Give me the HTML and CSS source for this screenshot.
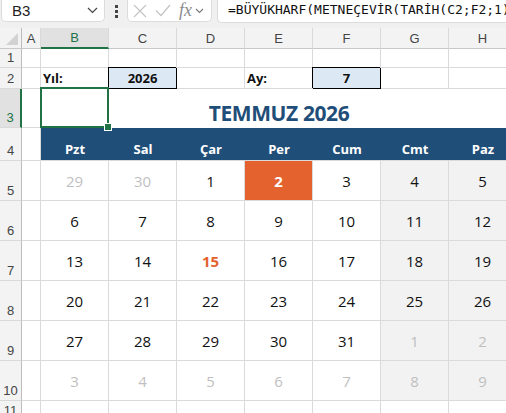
FILE: index.html
```html
<!DOCTYPE html>
<html lang="tr">
<head>
<meta charset="utf-8">
<title>Takvim - Temmuz 2026</title>
<link rel="stylesheet" href="styles.css">
</head>
<body>

<div class="toolbar">
  <div class="namebox">
    <span>B3</span>
    <svg width="11" height="7" viewBox="0 0 11 7"><path d="M1 1l4.5 4.5L10 1" fill="none" stroke="#444" stroke-width="1.2"/></svg>
  </div>
  <div class="kebab"><i></i><i></i><i></i></div>
  <div class="fxbox">
    <svg width="14" height="14" viewBox="0 0 14 14"><path d="M1 1l12 12M13 1L1 13" fill="none" stroke="#c4c4c4" stroke-width="1.2"/></svg>
    <svg width="16" height="13" viewBox="0 0 16 13"><path d="M1 6.5l5 5L15 1" fill="none" stroke="#c4c4c4" stroke-width="1.2"/></svg>
    <span class="fx">fx</span>
    <svg width="9" height="6" viewBox="0 0 9 6"><path d="M1 1l3.5 3.5L8 1" fill="none" stroke="#777" stroke-width="1.1"/></svg>
  </div>
  <div class="formula">=BÜYÜKHARF(METNEÇEVİR(TARİH(C2;F2;1);"aaaa yyyy"))</div>
</div>

<div class="sheet">
  <!-- column headers -->
  <div class="corner"><svg width="12" height="12" viewBox="0 0 12 12"><path d="M12 0V12H0z" fill="#d2d2d2"/></svg></div>
  <div class="colh">A</div>
  <div class="colh sel">B</div>
  <div class="colh">C</div>
  <div class="colh">D</div>
  <div class="colh">E</div>
  <div class="colh">F</div>
  <div class="colh">G</div>
  <div class="colh">H</div>

  <!-- row 1 -->
  <div class="rowh">1</div>
  <div class="cell"></div><div class="cell"></div><div class="cell"></div><div class="cell"></div>
  <div class="cell"></div><div class="cell"></div><div class="cell"></div><div class="cell"></div>

  <!-- row 2 -->
  <div class="rowh">2</div>
  <div class="cell"></div>
  <div class="cell lbl">Yıl:</div>
  <div class="cell input">2026</div>
  <div class="cell"></div>
  <div class="cell lbl">Ay:</div>
  <div class="cell input">7</div>
  <div class="cell"></div>
  <div class="cell"></div>

  <!-- row 3 -->
  <div class="rowh sel">3</div>
  <div class="cell"></div>
  <div class="cell title">
    TEMMUZ 2026
    <span class="selection"><span class="handle"></span></span>
  </div>

  <!-- row 4 -->
  <div class="rowh">4</div>
  <div class="cell"></div>
  <div class="dname">Pzt</div>
  <div class="dname">Sal</div>
  <div class="dname">Çar</div>
  <div class="dname">Per</div>
  <div class="dname">Cum</div>
  <div class="dname">Cmt</div>
  <div class="dname">Paz</div>

  <!-- row 5 -->
  <div class="rowh">5</div>
  <div class="cell"></div>
  <div class="cell day muted">29</div>
  <div class="cell day muted">30</div>
  <div class="cell day">1</div>
  <div class="cell day today">2</div>
  <div class="cell day">3</div>
  <div class="cell day we">4</div>
  <div class="cell day we">5</div>

  <!-- row 6 -->
  <div class="rowh">6</div>
  <div class="cell"></div>
  <div class="cell day">6</div>
  <div class="cell day">7</div>
  <div class="cell day">8</div>
  <div class="cell day">9</div>
  <div class="cell day">10</div>
  <div class="cell day we">11</div>
  <div class="cell day we">12</div>

  <!-- row 7 -->
  <div class="rowh">7</div>
  <div class="cell"></div>
  <div class="cell day">13</div>
  <div class="cell day">14</div>
  <div class="cell day holiday">15</div>
  <div class="cell day">16</div>
  <div class="cell day">17</div>
  <div class="cell day we">18</div>
  <div class="cell day we">19</div>

  <!-- row 8 -->
  <div class="rowh">8</div>
  <div class="cell"></div>
  <div class="cell day">20</div>
  <div class="cell day">21</div>
  <div class="cell day">22</div>
  <div class="cell day">23</div>
  <div class="cell day">24</div>
  <div class="cell day we">25</div>
  <div class="cell day we">26</div>

  <!-- row 9 -->
  <div class="rowh">9</div>
  <div class="cell"></div>
  <div class="cell day">27</div>
  <div class="cell day">28</div>
  <div class="cell day">29</div>
  <div class="cell day">30</div>
  <div class="cell day">31</div>
  <div class="cell day we muted">1</div>
  <div class="cell day we muted">2</div>

  <!-- row 10 -->
  <div class="rowh">10</div>
  <div class="cell"></div>
  <div class="cell day muted">3</div>
  <div class="cell day muted">4</div>
  <div class="cell day muted">5</div>
  <div class="cell day muted">6</div>
  <div class="cell day muted">7</div>
  <div class="cell day we muted">8</div>
  <div class="cell day we muted">9</div>

  <!-- row 11 -->
  <div class="rowh">11</div>
  <div class="cell"></div><div class="cell"></div><div class="cell"></div><div class="cell"></div>
  <div class="cell"></div><div class="cell"></div><div class="cell"></div><div class="cell"></div>
</div>

</body>
</html>
```

FILE: styles.css
```css
html, body {
  margin: 0;
  height: 100%;
}
body {
  width: 506px;
  height: 413px;
  overflow: hidden;
  background-color: #fff;
  font-family: "Open Sans", sans-serif;
  color: #111;
}

/* formula bar */
.toolbar {
  display: flex;
  align-items: flex-start;
  height: 28px;
  padding-left: 1px;
  background: #f0f0f0;
  box-sizing: border-box;
}
.namebox {
  width: 104px;
  height: 22px;
  display: flex;
  align-items: center;
  justify-content: space-between;
  padding: 0 6px 0 10px;
  box-sizing: border-box;
  background: #fff;
  border: 1px solid #dcdcdc;
  border-top: none;
  border-radius: 0 0 5px 5px;
  font-family: "Liberation Sans", sans-serif;
  font-size: 15px;
  color: #222;
}
.kebab {
  width: 22px;
  height: 22px;
  display: flex;
  flex-direction: column;
  align-items: center;
  justify-content: center;
  gap: 2px;
}
.kebab i {
  width: 3px;
  height: 3px;
  background: #444;
}
.fxbox {
  width: 85px;
  height: 22px;
  display: flex;
  align-items: center;
  gap: 8px;
  padding-left: 5px;
  box-sizing: border-box;
  background: #fff;
  border: 1px solid #dcdcdc;
  border-top: none;
  border-radius: 0 0 5px 5px;
}
.fx {
  font-family: "Liberation Serif", serif;
  font-style: italic;
  font-size: 18px;
  color: #8c8c8c;
  margin-right: -5px;
}
.formula {
  flex: 1;
  height: 22px;
  margin-left: 5px;
  padding-left: 10px;
  background: #fff;
  border: 1px solid #dcdcdc;
  border-top: none;
  border-right: none;
  border-bottom-left-radius: 5px;
  font-family: "DejaVu Sans Mono", monospace;
  font-size: 13px;
  line-height: 20px;
  white-space: nowrap;
  overflow: hidden;
  color: #111;
}

/* grid */
.sheet {
  display: grid;
  grid-template-columns: 22px 19px repeat(7, 68px);
  grid-template-rows: 21px 19px 21px 39px 33px repeat(6, 40px) 20px;
}
.sheet > div {
  box-sizing: border-box;
}
.corner {
  display: flex;
  align-items: flex-end;
  justify-content: flex-end;
  padding: 0 3px 3px 0;
  background: #f3f3f3;
  border-right: 1px solid #bdbdbd;
  border-bottom: 1px solid #c8c8c8;
}
.colh {
  display: flex;
  align-items: center;
  justify-content: center;
  background: #f3f3f3;
  border-right: 1px solid #d9d9d9;
  border-bottom: 1px solid #c8c8c8;
  font-family: "Liberation Sans", sans-serif;
  font-size: 13px;
  color: #444;
}
.colh.sel {
  background: #e1e1e1;
  color: #217346;
  border-bottom: 2px solid #217346;
}
.rowh {
  display: flex;
  align-items: flex-end;
  justify-content: center;
  padding-bottom: 2px;
  background: #f3f3f3;
  border-right: 1px solid #bdbdbd;
  border-bottom: 1px solid #d9d9d9;
  font-family: "Liberation Sans", sans-serif;
  font-size: 13px;
  color: #444;
}
.rowh.sel {
  background: #e1e1e1;
  color: #217346;
  border-right: 2px solid #217346;
}
.cell {
  border-right: 1px solid #dadada;
  border-bottom: 1px solid #dadada;
}

.lbl {
  display: flex;
  align-items: center;
  padding-left: 2px;
  font-size: 13px;
  font-weight: 700;
}
.input {
  display: flex;
  align-items: center;
  justify-content: center;
  background: #dde8f5;
  border-right-color: #000;
  border-bottom-color: #000;
  box-shadow: -1px -1px 0 #000;
  font-size: 13px;
  font-weight: 700;
}

.title {
  grid-column: span 7;
  position: relative;
  display: flex;
  align-items: flex-end;
  justify-content: center;
  padding-bottom: 1px;
  border-right: none;
  border-bottom: none;
  font-size: 21px;
  font-weight: 700;
  letter-spacing: -0.4px;
  color: #1f4e79;
}
.selection {
  position: absolute;
  left: -1px;
  top: -2px;
  width: 69px;
  height: 41px;
  border: 2px solid #217346;
  box-sizing: border-box;
}
.handle {
  position: absolute;
  right: -5px;
  bottom: -5px;
  width: 6px;
  height: 6px;
  background: #217346;
  border: 1px solid #fff;
}

.dname {
  display: flex;
  align-items: flex-end;
  justify-content: center;
  padding-bottom: 2px;
  background: #1f4e79;
  border-bottom: 1px solid #dadada;
  font-size: 13px;
  font-weight: 700;
  color: #fff;
}

.day {
  display: flex;
  align-items: center;
  justify-content: center;
  font-size: 15px;
}
.day.we {
  background: #f2f2f2;
}
.day.muted {
  color: #bfbfbf;
}
.day.today {
  background: #e3622e;
  color: #fff;
  font-weight: 700;
}
.day.holiday {
  color: #e3622e;
  font-weight: 700;
}
```
